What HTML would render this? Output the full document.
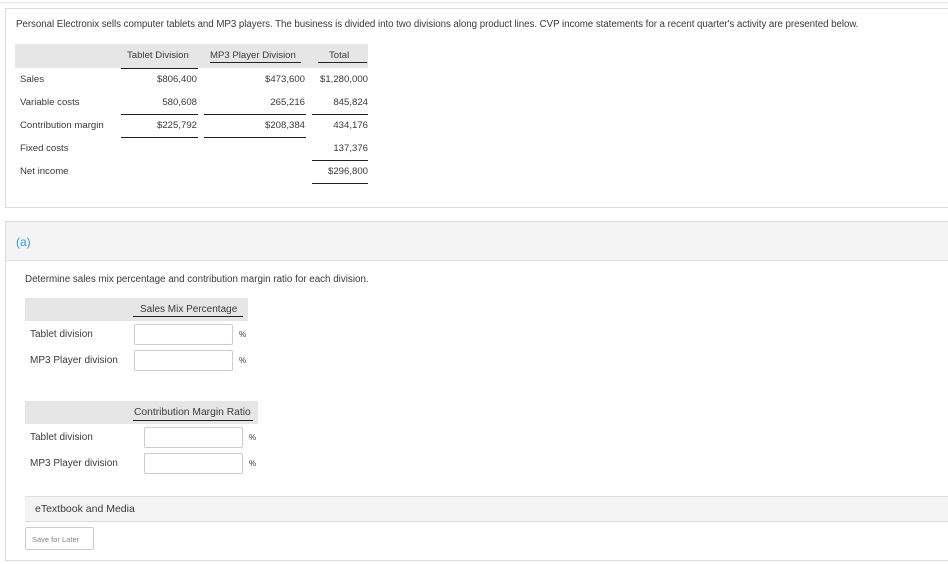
<!DOCTYPE html>
<html><head><style>
*{margin:0;padding:0;box-sizing:border-box}
body{width:948px;height:564px;background:#fff;font-family:"Liberation Sans",sans-serif;color:#3a3a3a;position:relative;overflow:hidden}
.a{position:absolute;white-space:nowrap;font-size:9.6px;line-height:11px}
.r{text-align:right}
.l{position:absolute;height:1px;background:#222}
.in{position:absolute;border:1px solid #ccc;background:#fff;border-radius:2px}
</style></head><body>
<div style="position:absolute;left:0;top:2px;width:948px;height:1px;background:#e6e6e6"></div>
<div style="position:absolute;left:5px;top:8px;width:950px;height:200px;border:1px solid #ddd"></div>
<div class="a" style="left:16px;top:19px;font-size:9.75px;letter-spacing:-0.05px">Personal Electronix sells computer tablets and MP3 players. The business is divided into two divisions along product lines. CVP income statements for a recent quarter's activity are presented below.</div>
<div style="position:absolute;left:15px;top:44px;width:353px;height:24px;background:#e6e6e6"></div>
<div class="a" style="left:127px;top:50px">Tablet Division</div>
<div class="a" style="left:210px;top:50px">MP3 Player Division</div>
<div class="a" style="left:329px;top:50px">Total</div>
<div class="l" style="left:210px;top:62px;width:91px"></div>
<div class="l" style="left:318px;top:62px;width:49px"></div>
<div class="l" style="left:121px;top:68px;width:77px"></div>
<div class="a" style="left:20px;top:74px">Sales</div>
<div class="a" style="left:20px;top:97px">Variable costs</div>
<div class="a" style="left:20px;top:120px">Contribution margin</div>
<div class="a" style="left:20px;top:143px">Fixed costs</div>
<div class="a" style="left:20px;top:166px">Net income</div>
<div class="a r" style="right:751px;top:74px">$806,400</div>
<div class="a r" style="right:751px;top:97px">580,608</div>
<div class="a r" style="right:751px;top:120px">$225,792</div>
<div class="a r" style="right:643px;top:74px">$473,600</div>
<div class="a r" style="right:643px;top:97px">265,216</div>
<div class="a r" style="right:643px;top:120px">$208,384</div>
<div class="a r" style="right:580px;top:74px">$1,280,000</div>
<div class="a r" style="right:580px;top:97px">845,824</div>
<div class="a r" style="right:580px;top:120px">434,176</div>
<div class="a r" style="right:580px;top:143px">137,376</div>
<div class="a r" style="right:580px;top:166px">$296,800</div>
<div class="l" style="left:121px;top:114px;width:77px"></div>
<div class="l" style="left:204px;top:114px;width:102px"></div>
<div class="l" style="left:312px;top:114px;width:56px"></div>
<div class="l" style="left:121px;top:137px;width:77px"></div>
<div class="l" style="left:204px;top:137px;width:102px"></div>
<div class="l" style="left:312px;top:160px;width:56px"></div>
<div class="l" style="left:312px;top:183px;width:56px"></div>

<div style="position:absolute;left:5px;top:221px;width:950px;height:340px;border:1px solid #ddd"></div>
<div style="position:absolute;left:6px;top:222px;width:942px;height:39px;background:#f4f4f4;border-bottom:1px solid #ddd"></div>
<div class="a" style="left:16px;top:235px;font-size:12px;line-height:14px;color:#2a9ed8">(a)</div>
<div class="a" style="left:25px;top:274px;font-size:9.8px">Determine sales mix percentage and contribution margin ratio for each division.</div>

<div style="position:absolute;left:25px;top:298px;width:223px;height:23px;background:#e6e6e6"></div>
<div class="a" style="left:140px;top:304px;font-size:10px">Sales Mix Percentage</div>
<div class="l" style="left:133px;top:316px;width:110px"></div>
<div class="a" style="left:30px;top:329px;font-size:10px">Tablet division</div>
<div class="a" style="left:30px;top:355px;font-size:10px">MP3 Player division</div>
<div class="in" style="left:134px;top:324px;width:99px;height:21px"></div>
<div class="in" style="left:134px;top:350px;width:99px;height:21px"></div>
<div class="a" style="left:239px;top:329px;font-size:8px">%</div>
<div class="a" style="left:239px;top:355px;font-size:8px">%</div>

<div style="position:absolute;left:25px;top:401px;width:233px;height:23px;background:#e6e6e6"></div>
<div class="a" style="left:134px;top:407px;font-size:10.3px">Contribution Margin Ratio</div>
<div class="l" style="left:133px;top:420px;width:120px"></div>
<div class="a" style="left:30px;top:432px;font-size:10px">Tablet division</div>
<div class="a" style="left:30px;top:458px;font-size:10px">MP3 Player division</div>
<div class="in" style="left:144px;top:427px;width:99px;height:21px"></div>
<div class="in" style="left:144px;top:453px;width:99px;height:21px"></div>
<div class="a" style="left:249px;top:432px;font-size:8px">%</div>
<div class="a" style="left:249px;top:458px;font-size:8px">%</div>

<div style="position:absolute;left:25px;top:496px;width:930px;height:26px;background:#f3f3f3;border-top:1px solid #ddd;border-bottom:1px solid #ddd"></div>
<div class="a" style="left:35px;top:503px;font-size:10.5px;line-height:12px">eTextbook and Media</div>
<div style="position:absolute;left:25px;top:527px;width:69px;height:23px;border:1px solid #ccc;border-radius:2px"></div>
<div class="a" style="left:32px;top:534px;font-size:7.5px;color:#888">Save for Later</div>
</body></html>
